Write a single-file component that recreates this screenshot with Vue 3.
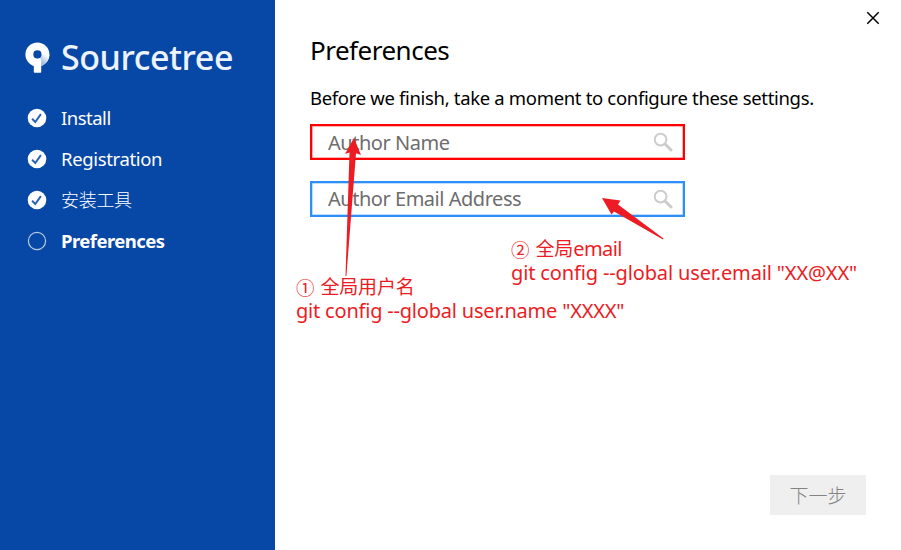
<script setup>
const steps = [
  { label: 'Install', done: true, cls: 'install' },
  { label: 'Registration', done: true, cls: 'registration' },
  { label: '安装工具', done: true, cls: 'cjk' },
  { label: 'Preferences', done: false, cls: 'current' },
]
const fields = [
  { label: 'Author Name', cls: 'name' },
  { label: 'Author Email Address', cls: 'email' },
]
</script>

<template>
  <div class="window">
    <aside class="sidebar">
      <div class="brand">
        <svg class="mark" width="26" height="32" viewBox="0 0 26 32">
          <defs>
            <linearGradient id="fade" x1="0.9" y1="0" x2="0.1" y2="0.9">
              <stop offset="0.1" stop-color="#fff" />
              <stop offset="1" stop-color="#7c9fd2" />
            </linearGradient>
          </defs>
          <circle cx="12.4" cy="12.6" r="12" fill="#fff" />
          <path d="M12.4 12.6H24.4A12 12 0 0 1 16.2 24L12.4 20Z" fill="url(#fade)" />
          <path d="M8.8 15H14.5Q16.2 17 16.2 19.5V30Q16.2 30.8 15.4 30.8H9.6Q8.8 30.8 8.8 30Z" fill="#fff" />
          <circle cx="12.4" cy="12.4" r="4.1" fill="#0747a6" />
        </svg>
        <span class="wordmark">Sourcetree</span>
      </div>
      <ul class="steps">
        <li v-for="step in steps" :key="step.label">
          <svg width="20" height="20" viewBox="0 0 20 20">
            <template v-if="step.done">
              <circle cx="10" cy="10" r="9.3" fill="#fff" />
              <path d="M5.1 10.8L8.3 14L13.9 6.2" fill="none" stroke="#2a62b4" stroke-width="2" />
            </template>
            <circle v-else cx="10" cy="10" r="8.6" fill="none" stroke="#b9cbe6" stroke-width="1.2" />
          </svg>
          <span class="label" :class="step.cls">{{ step.label }}</span>
        </li>
      </ul>
    </aside>
    <main class="content">
      <h1>Preferences</h1>
      <p class="intro">Before we finish, take a moment to configure these settings.</p>
      <div v-for="field in fields" :key="field.label" class="field" :class="field.cls">
        <span class="hint">{{ field.label }}</span>
        <svg width="20" height="20" viewBox="0 0 20 20" fill="none" stroke="#cccccc">
          <circle cx="7.6" cy="7.6" r="5.9" stroke-width="2" />
          <path d="M12 12L18 18" stroke-width="3" stroke-linecap="round" />
        </svg>
      </div>
      <button class="next">下一步</button>
    </main>
    <svg class="close" width="14" height="14" viewBox="0 0 14 14">
      <path d="M1.3 1.3L12.7 12.7M12.7 1.3L1.3 12.7" stroke="#000" stroke-width="1.5" />
    </svg>
    <svg class="arrows" width="901" height="550" viewBox="0 0 901 550" fill="#ed1c24">
      <path d="M354 138L361 155L356 153.3L346.4 276L345.5 276L349.5 152.5L345 154Z" />
      <path d="M602 198L620.5 200.5L618 204.5L663.5 238.5L663 239.5L614 211.5L611.5 214.5Z" />
    </svg>
    <div class="note note-name">
      <div class="line"><span class="num">①</span><span class="han">全局用户名</span></div>
      <div class="line">git config --global user.name "XXXX"</div>
    </div>
    <div class="note note-email">
      <div class="line"><span class="num">②</span><span class="han">全局</span><span class="latin">email</span></div>
      <div class="line">git config --global user.email "XX@XX"</div>
    </div>
  </div>
</template>

<style>
body {
  margin: 0;
  background: #fff;
}
</style>

<style scoped>
.window {
  position: relative;
  display: flex;
  width: 901px;
  height: 550px;
  overflow: hidden;
  background: #fff;
  color: #000;
  font-family: "Noto Sans", "Noto Sans CJK SC", sans-serif;
  white-space: nowrap;
}
.sidebar {
  box-sizing: border-box;
  width: 275px;
  padding: 37px 0 0 25px;
  background: #0747a6;
  color: #fff;
}
.brand {
  display: flex;
  height: 40px;
  gap: 10px;
}
.mark {
  margin-top: 5px;
}
.wordmark {
  color: #edf3fc;
  font-size: 34px;
  font-weight: 500;
  line-height: 41px;
  letter-spacing: -0.45px;
}
.steps {
  margin: 20px 0 0;
  padding: 0 0 0 2px;
  list-style: none;
}
.steps li {
  display: flex;
  align-items: center;
  height: 41px;
  gap: 14px;
}
.steps svg {
  position: relative;
  top: 0.5px;
}
.label {
  font-size: 18.5px;
  line-height: 24px;
  letter-spacing: -0.35px;
}
.label.install {
  letter-spacing: -0.5px;
}
.label.cjk {
  font-size: 18px;
  font-weight: 300;
  letter-spacing: -0.3px;
}
.label.current {
  font-weight: 700;
  letter-spacing: -0.55px;
}
.content {
  display: flex;
  flex: 1;
  flex-direction: column;
  padding: 34px 35px 35px;
}
h1 {
  height: 32px;
  margin: 0;
  font-size: 26px;
  font-weight: 400;
  line-height: 32px;
  letter-spacing: -0.5px;
}
.intro {
  height: 24px;
  margin: 20px 0 14px;
  font-size: 18.5px;
  line-height: 24px;
  letter-spacing: -0.33px;
}
.field {
  box-sizing: border-box;
  display: flex;
  align-items: center;
  justify-content: space-between;
  width: 375px;
  height: 36px;
  margin-bottom: 20.5px;
  padding: 0 10px 0 16px;
  border: 2px solid #f00;
  box-shadow: inset 0 0 0 0.5px #f66;
  color: #6d6d6d;
  font-size: 20px;
  letter-spacing: -0.47px;
}
.field.email {
  border-color: #2d8ff7;
  box-shadow: inset 0 0 0 0.5px #7ebafa;
}
.next {
  align-self: flex-end;
  width: 96px;
  height: 40px;
  margin-top: auto;
  padding: 0;
  border: 0;
  background: #efefef;
  color: #838383;
  font: 300 19px/38px "Noto Sans CJK SC", sans-serif;
}
.close {
  position: absolute;
  top: 11px;
  right: 21px;
}
.arrows {
  position: absolute;
  top: 0;
  left: 0;
}
.note {
  position: absolute;
  color: #ed1c24;
  font-size: 20px;
  line-height: 24px;
}
.line {
  display: flex;
  height: 24px;
}
.num {
  width: 24.5px;
  font-size: 18.5px;
  line-height: 26px;
}
.han {
  font-size: 19px;
  line-height: 24px;
}
.latin {
  letter-spacing: -0.6px;
}
.note-name {
  top: 275px;
  left: 296px;
  letter-spacing: -0.2px;
}
.note-email {
  top: 237px;
  left: 511px;
  letter-spacing: -0.14px;
}
</style>
